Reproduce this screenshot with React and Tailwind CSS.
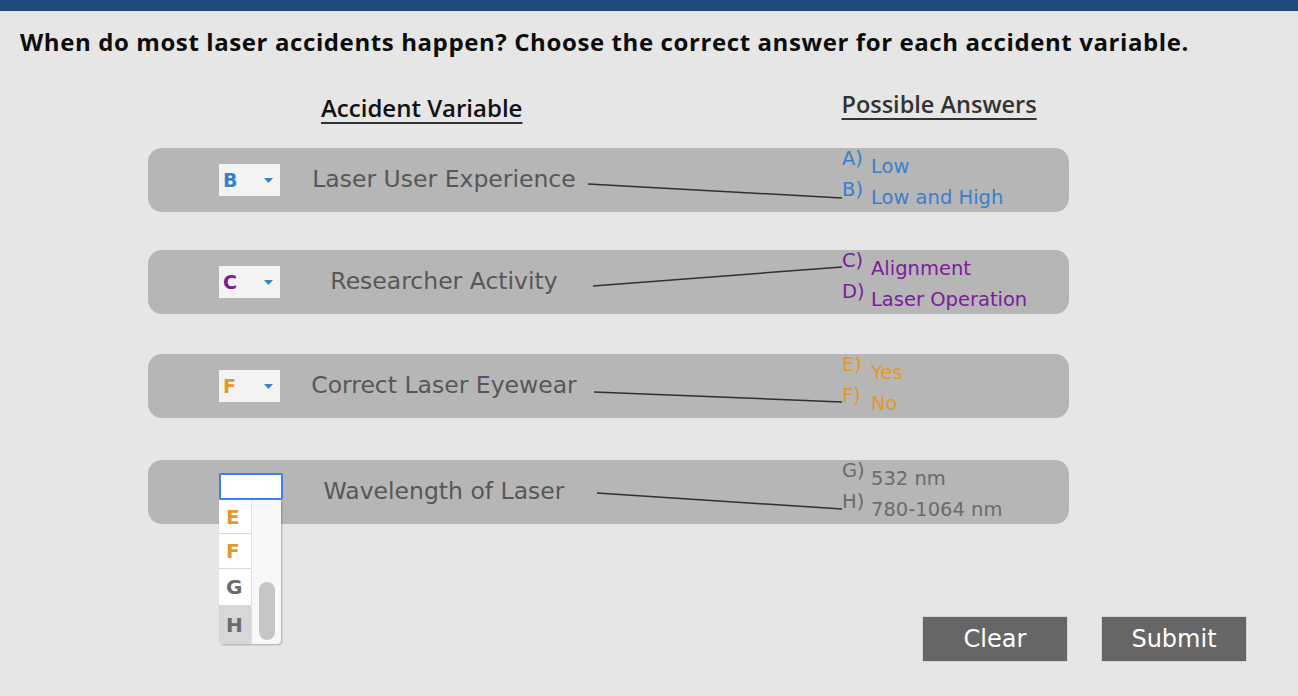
import React from 'react';

const ROWS = [
  {
    label: 'Laser User Experience',
    value: 'B',
    color: 'text-[#3a7fcc]',
    answers: [['A)', 'Low'], ['B)', 'Low and High']],
    line: [440, 36, 694, 50],
  },
  {
    label: 'Researcher Activity',
    value: 'C',
    color: 'text-[#7b1c9c]',
    answers: [['C)', 'Alignment'], ['D)', 'Laser Operation']],
    line: [445, 36, 694, 17],
  },
  {
    label: 'Correct Laser Eyewear',
    value: 'F',
    color: 'text-[#e3982c]',
    answers: [['E)', 'Yes'], ['F)', 'No']],
    line: [446, 38, 694, 48],
  },
  {
    label: 'Wavelength of Laser',
    value: '',
    color: 'text-[#6b6b6b]',
    answers: [['G)', '532 nm'], ['H)', '780-1064 nm']],
    line: [449, 33, 694, 49],
    open: true,
  },
];

const sans = { fontFamily: '"DejaVu Sans", Verdana, sans-serif' };
const head = { fontFamily: '"Open Sans", Lato, sans-serif' };

function Caret() {
  return (
    <svg width="9" height="5" viewBox="0 0 9 5">
      <path d="M0 0 L9 0 L4.5 5 Z" fill="#3a7fcc" />
    </svg>
  );
}

function OpenList() {
  const items = [
    ['E', 'text-[#e3982c]', 'h-[34px]'],
    ['F', 'text-[#e3982c]', 'h-[35px]'],
    ['G', 'text-[#6b6b6b]', 'h-[37px]'],
    ['H', 'text-[#6b6b6b]', 'h-[38px] bg-[#d7d7d7]'],
  ];
  return (
    <div className="absolute left-[71px] top-[13px] w-[64px] z-10">
      <div className="h-[27px] bg-white border-2 border-[#3b7ff0] rounded-[2px]" />
      <div className="flex w-[62px] bg-[#f8f8f8] rounded-b-[4px] shadow-[1px_1px_2px_rgba(0,0,0,0.25)] overflow-hidden">
        <div className="w-[32px] flex flex-col bg-white">
          {items.map(([l, c, extra], i) => (
            <div
              key={l}
              className={`flex items-center pl-[7px] text-[20px] font-bold ${c} ${extra} ${i < 3 ? 'border-b border-[#d9d9d9]' : ''}`}
              style={sans}
            >
              {l}
            </div>
          ))}
        </div>
        <div className="flex-1 flex flex-col justify-end items-center pb-[4px] border-l border-[#e2e2e2]">
          <div className="w-[16px] h-[58px] rounded-full bg-[#c6c6c6]" />
        </div>
      </div>
    </div>
  );
}

function Row({ row, top }) {
  const [x1, y1, x2, y2] = row.line;
  return (
    <div className={`relative h-[64px] w-[921px] rounded-[14px] bg-[#b6b6b6] flex items-center ${top}`}>
      <svg className="absolute inset-0 pointer-events-none" width="921" height="64">
        <line x1={x1} y1={y1} x2={x2} y2={y2} stroke="#2f2f2f" strokeWidth="1.5" />
      </svg>
      {row.open ? (
        <div className="ml-[71px] w-[61px] h-[32px]" />
      ) : (
        <div className="ml-[71px] w-[61px] h-[32px] bg-[#f3f3f3] flex items-center justify-between pl-[4px] pr-[7px]">
          <span className={`text-[19px] font-bold ${row.color}`} style={sans}>{row.value}</span>
          <Caret />
        </div>
      )}
      <div className="ml-[10px] w-[308px] text-center text-[23.5px] text-[#575757] whitespace-nowrap" style={sans}>
        {row.label}
      </div>
      <div className="ml-[244px] flex flex-col">
        {row.answers.map(([k, v]) => (
          <div key={k} className={`h-[31px] flex items-start ${row.color}`} style={sans}>
            <span className="w-[29px] text-[19.5px] leading-[20px]">{k}</span>
            <span className="mt-[8px] text-[19.5px] leading-[20px] whitespace-nowrap">{v}</span>
          </div>
        ))}
      </div>
      {row.open && <OpenList />}
    </div>
  );
}

export default function App() {
  const tops = ['mt-[0px]', 'mt-[38px]', 'mt-[40px]', 'mt-[42px]'];
  return (
    <div className="w-[1298px] h-[696px] bg-[#e6e6e6] overflow-hidden">
      <div className="h-[11px] bg-[#1f4a7c]" />
      <h1
        className="pl-[20px] pt-[16px] text-[24px] leading-[30px] font-bold tracking-[0.6px] text-[#0d0d0d] whitespace-nowrap"
        style={head}
      >
        When do most laser accidents happen? Choose the correct answer for each accident variable.
      </h1>
      <div className="flex items-start leading-[30px] font-semibold text-[#111]" style={head}>
        <span className="ml-[321px] mt-[36px] text-[24px] underline underline-offset-[5px] decoration-[2px] decoration-[#333]">
          Accident Variable
        </span>
        <span className="ml-[319px] mt-[32px] text-[23.5px] underline underline-offset-[5px] decoration-[2px] decoration-[#333] text-[#333]">
          Possible Answers
        </span>
      </div>
      <div className="pl-[148px] pt-[25px] flex flex-col">
        {ROWS.map((r, i) => (
          <Row key={r.label} row={r} top={tops[i]} />
        ))}
      </div>
      <div className="flex justify-end gap-[33px] pr-[51px] mt-[92px]">
        {['Clear', 'Submit'].map((b) => (
          <button
            key={b}
            className="w-[146px] h-[46px] bg-[#666666] border border-[#d4d4d4] text-white text-[24px] flex items-center justify-center"
            style={sans}
          >
            {b}
          </button>
        ))}
      </div>
    </div>
  );
}
